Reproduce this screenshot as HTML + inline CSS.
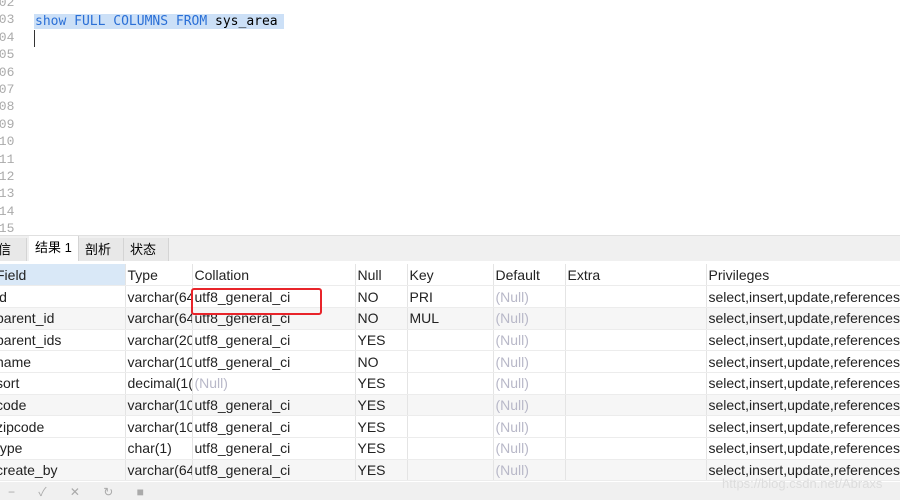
<!DOCTYPE html><html><head><style>
body{margin:0;width:900px;height:500px;overflow:hidden;background:#fff;font-family:"Liberation Sans","Noto Sans CJK SC",sans-serif;position:relative}
.ln{position:absolute;left:-9px;font:13px "Liberation Mono",monospace;color:#aaa;line-height:17.4px}
.code{position:absolute;left:34px;top:13px;font:13px "DejaVu Sans Mono",monospace;line-height:17.4px}
.sel{background:#cce0f7;padding:0 6px 0 1px}
.k{color:#2a6fd6}
.tabs{position:absolute;top:235px;left:0;width:900px;height:25px;background:#f0f0f0;border-top:1px solid #e0e0e0}
.tab{position:absolute;top:2px;height:23px;font-size:13px;line-height:23px;padding:0 6px;background:#e8e8e8;border-right:1px solid #d4d4d4;box-sizing:border-box}
table{position:absolute;top:264px;left:-6px;border-collapse:collapse;font-size:14px;color:#222;table-layout:fixed;width:1012px}
td{height:21.7px;padding:0 0 0 2px;border-right:1px solid #e4e4e4;border-bottom:1px solid #ececec;white-space:nowrap;overflow:hidden;box-sizing:border-box}
tr.h td{background:#fff}
tr.g td{background:#f6f6f6}
.n{color:#b8b8c8}
.bar{position:absolute;top:482px;left:0;width:900px;height:18px;background:#f0f0f0;color:#aaa;font-size:12px}
</style></head><body>
<div class="ln" style="top:-6px">502<br>503<br>504<br>505<br>506<br>507<br>508<br>509<br>510<br>511<br>512<br>513<br>514<br>515</div>
<div class="code"><span class="sel"><span class="k">show FULL COLUMNS FROM</span> sys_area</span><br><span style="border-left:1.5px solid #333;height:17px;display:inline-block"></span></div>
<div class="tabs">
<div class="tab" style="left:-8px;width:35px">信息</div>
<div class="tab" style="left:29px;width:50px;background:#fff;top:0;height:25px">结果 1</div>
<div class="tab" style="left:79px;width:45px">剖析</div>
<div class="tab" style="left:124px;width:45px">状态</div>
</div>
<table>
<colgroup><col style="width:131px"><col style="width:67px"><col style="width:163px"><col style="width:52px"><col style="width:86px"><col style="width:72px"><col style="width:141px"><col style="width:300px"></colgroup>
<tr class="h"><td style="background:#d9e8f7">Field</td><td>Type</td><td>Collation</td><td>Null</td><td>Key</td><td>Default</td><td>Extra</td><td>Privileges</td></tr>
<tr><td>id</td><td>varchar(64</td><td>utf8_general_ci</td><td>NO</td><td>PRI</td><td class="n">(Null)</td><td></td><td>select,insert,update,references</td></tr>
<tr class="g"><td>parent_id</td><td>varchar(64</td><td>utf8_general_ci</td><td>NO</td><td>MUL</td><td class="n">(Null)</td><td></td><td>select,insert,update,references</td></tr>
<tr><td>parent_ids</td><td>varchar(20</td><td>utf8_general_ci</td><td>YES</td><td></td><td class="n">(Null)</td><td></td><td>select,insert,update,references</td></tr>
<tr><td>name</td><td>varchar(10</td><td>utf8_general_ci</td><td>NO</td><td></td><td class="n">(Null)</td><td></td><td>select,insert,update,references</td></tr>
<tr><td>sort</td><td>decimal(1(</td><td class="n">(Null)</td><td>YES</td><td></td><td class="n">(Null)</td><td></td><td>select,insert,update,references</td></tr>
<tr class="g"><td>code</td><td>varchar(10</td><td>utf8_general_ci</td><td>YES</td><td></td><td class="n">(Null)</td><td></td><td>select,insert,update,references</td></tr>
<tr><td>zipcode</td><td>varchar(10</td><td>utf8_general_ci</td><td>YES</td><td></td><td class="n">(Null)</td><td></td><td>select,insert,update,references</td></tr>
<tr><td>type</td><td>char(1)</td><td>utf8_general_ci</td><td>YES</td><td></td><td class="n">(Null)</td><td></td><td>select,insert,update,references</td></tr>
<tr class="g"><td>create_by</td><td>varchar(64</td><td>utf8_general_ci</td><td>YES</td><td></td><td class="n">(Null)</td><td></td><td>select,insert,update,references</td></tr>
</table>
<div style="position:absolute;left:191px;top:288px;width:127px;height:23px;border:2px solid #e8242a;border-radius:3px"></div>
<div class="bar"><span style="position:absolute;left:8px;top:1px;letter-spacing:10px">− ✓ ✕ ↻ ■</span><span style="position:absolute;left:722px;top:-6px;color:#ddd;font-size:13px">https://blog.csdn.net/Abraxs</span></div>
</body></html>
